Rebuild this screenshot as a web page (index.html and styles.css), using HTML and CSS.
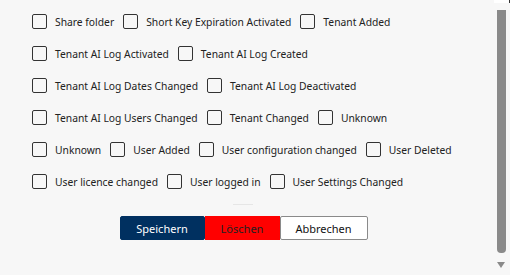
FILE: index.html
```html
<!DOCTYPE html>
<html>
 <head>
     <title>Benachrichtigungen</title>
     <link rel="stylesheet" href="styles.css">
     <meta charset="UTF-8">
 </head>
 <body>
    <div class="main">
      <div class="rows">
        <div class="row">
          <label class="opt"><input type="checkbox"><span>Share folder</span></label>
          <label class="opt"><input type="checkbox"><span>Short Key Expiration Activated</span></label>
          <label class="opt"><input type="checkbox"><span>Tenant Added</span></label>
        </div>
        <div class="row">
          <label class="opt"><input type="checkbox"><span>Tenant AI Log Activated</span></label>
          <label class="opt"><input type="checkbox"><span>Tenant AI Log Created</span></label>
        </div>
        <div class="row">
          <label class="opt"><input type="checkbox"><span>Tenant AI Log Dates Changed</span></label>
          <label class="opt"><input type="checkbox"><span>Tenant AI Log Deactivated</span></label>
        </div>
        <div class="row">
          <label class="opt"><input type="checkbox"><span>Tenant AI Log Users Changed</span></label>
          <label class="opt"><input type="checkbox"><span>Tenant Changed</span></label>
          <label class="opt"><input type="checkbox"><span>Unknown</span></label>
        </div>
        <div class="row">
          <label class="opt"><input type="checkbox"><span>Unknown</span></label>
          <label class="opt"><input type="checkbox"><span>User Added</span></label>
          <label class="opt"><input type="checkbox"><span>User configuration changed</span></label>
          <label class="opt"><input type="checkbox"><span>User Deleted</span></label>
        </div>
        <div class="row">
          <label class="opt"><input type="checkbox"><span>User licence changed</span></label>
          <label class="opt"><input type="checkbox"><span>User logged in</span></label>
          <label class="opt"><input type="checkbox"><span>User Settings Changed</span></label>
        </div>
      </div>
      <div class="sep"></div>
      <div class="buttons">
        <button class="btn_save">Speichern</button>
        <button class="btn_delete">Löschen</button>
        <button class="btn_cancel">Abbrechen</button>
      </div>
    </div>
    <div class="scrollbar">
      <div class="sb_top"></div>
      <div class="sb_thumb"></div>
      <div class="sb_arrow"></div>
    </div>
 </body>
</html>
```

FILE: styles.css
```css
html, body {margin:0; height:100%;}
body {display:flex; background-color:#f7f7f7; font-family:"Noto Sans", "Open Sans", sans-serif; font-size:10.3px; color:#222; overflow:hidden;}
.main {flex:1; padding:14px 5px 0 32px;}
.rows {display:flex; flex-direction:column; gap:17px;}
.row {display:flex; align-items:center; gap:9px; height:15px;}
.opt {display:flex; align-items:center; gap:8px; white-space:nowrap;}
.opt input {appearance:none; -webkit-appearance:none; width:15px; height:15px; margin:0; border:1px solid #333; border-radius:2px; background:transparent;}
.sep {width:20px; height:1px; background-color:#e6e6e6; margin:15px 0 0 201px;}
.buttons {display:flex; justify-content:center; margin-top:11px; padding-right:33px;}
.buttons button {height:24px; margin:0; font-family:inherit; font-size:11px; border-radius:2px; padding:0;}
.btn_save {width:85px; background-color:#003060; color:#fff; border:1px solid #003060;}
.btn_delete {width:75px; background-color:#ff0000; color:#222; border:1px solid #ff0000; border-radius:0 !important;}
.btn_cancel {width:88px; background-color:#fff; color:#111; border:1px solid #8a8a8a;}
.scrollbar {width:17px; display:flex; flex-direction:column; align-items:flex-start;}
.sb_top {width:15px; height:3px; margin-left:1px; background-color:#fff; border-right:1px solid #333;}
.sb_thumb {width:9px; height:243px; margin:7px 0 0 4px; background-color:#8a8a8a; border-radius:0 0 4px 4px;}
.sb_arrow {width:0; height:0; margin:9px 0 0 4px; border-left:4.5px solid transparent; border-right:4.5px solid transparent; border-top:6px solid #8a8a8a;}
```
